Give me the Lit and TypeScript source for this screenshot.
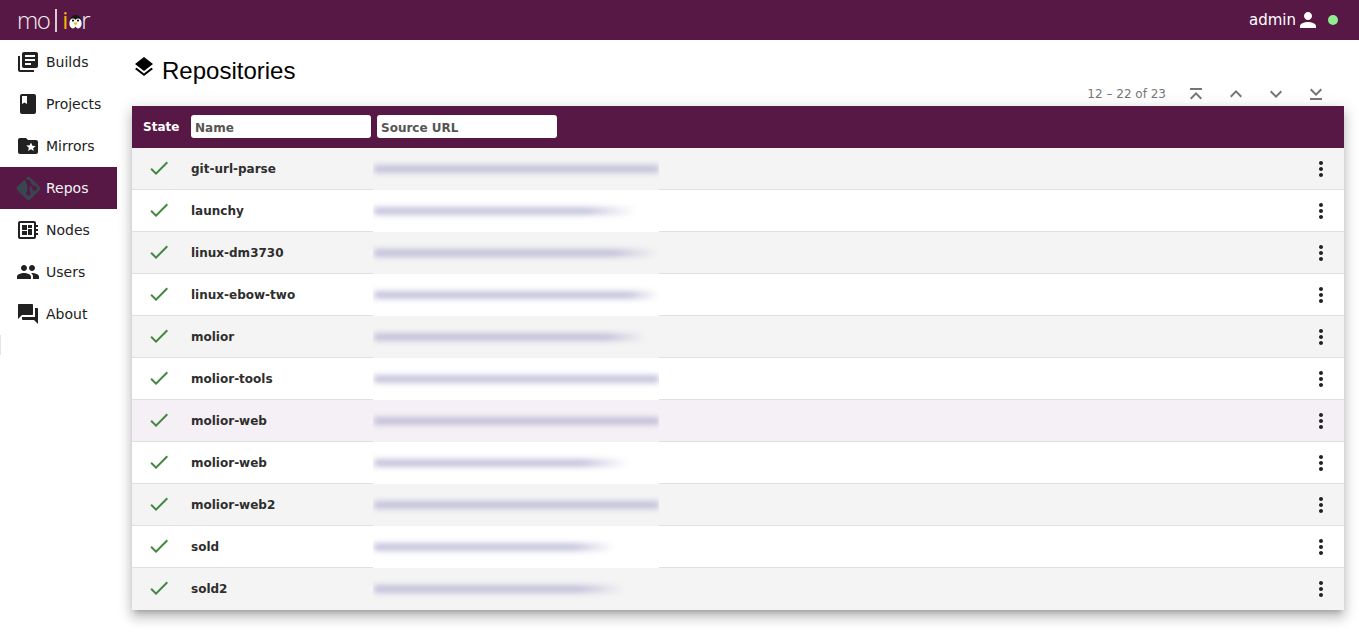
import { LitElement, html, css, svg } from 'lit';
import { customElement } from 'lit/decorators.js';

const icon = (d: string, size = 24) => html`<svg class="icon" width=${size} height=${size} viewBox="0 0 24 24">${svg`<path d=${d}></path>`}</svg>`;

const ICONS = {
  builds: 'M4 6H2v14c0 1.1.9 2 2 2h14v-2H4V6zm16-4H8c-1.1 0-2 .9-2 2v12c0 1.1.9 2 2 2h12c1.1 0 2-.9 2-2V4c0-1.1-.9-2-2-2zm-1 9H9V9h10v2zm-4 4H9v-2h6v2zm4-8H9V5h10v2z',
  projects: 'M18 2H6c-1.1 0-2 .9-2 2v16c0 1.1.9 2 2 2h12c1.1 0 2-.9 2-2V4c0-1.1-.9-2-2-2zM6 4h5v8l-2.5-1.5L6 12V4z',
  mirrors: 'M20 6h-8l-2-2H4c-1.1 0-1.99.9-1.99 2L2 18c0 1.1.9 2 2 2h16c1.1 0 2-.9 2-2V8c0-1.1-.9-2-2-2zm-2.06 11L15 15.28 12.06 17l.78-3.33-2.59-2.24 3.41-.29L15 8.5l1.34 3.14 3.41.29-2.59 2.24.78 3.33z',
  git: 'M2.6,10.59L8.38,4.8L10.07,6.5C9.83,7.35 10.22,8.28 11,8.73V14.27C10.4,14.61 10,15.26 10,16A2,2 0 0,0 12,18A2,2 0 0,0 14,16C14,15.26 13.6,14.61 13,14.27V9.41L15.07,11.5C15,11.65 15,11.82 15,12A2,2 0 0,0 17,14A2,2 0 0,0 19,12A2,2 0 0,0 17,10C16.82,10 16.65,10 16.5,10.07L13.93,7.5C14.19,6.57 13.71,5.55 12.78,5.16C12.35,5 11.9,4.96 11.5,5.07L9.8,3.38L10.59,2.81C11.37,2.03 12.63,2.03 13.41,2.81L21.19,10.59C21.97,11.37 21.97,12.63 21.19,13.41L13.41,21.19C12.63,21.97 11.37,21.97 10.59,21.19L2.81,13.41C2.03,12.63 2.03,11.37 2.81,10.59Z',
  nodes: 'M22 9V7h-2V5c0-1.1-.9-2-2-2H4c-1.1 0-2 .9-2 2v14c0 1.1.9 2 2 2h14c1.1 0 2-.9 2-2v-2h2v-2h-2v-2h2v-2h-2V9h2zm-4 10H4V5h14v14zM6 13h5v4H6zm6-6h4v3h-4zM6 7h5v5H6zm6 4h4v6h-4z',
  users: 'M16 11c1.66 0 2.99-1.34 2.99-3S17.66 5 16 5c-1.66 0-3 1.34-3 3s1.34 3 3 3zm-8 0c1.66 0 2.99-1.34 2.99-3S9.66 5 8 5C6.34 5 5 6.34 5 8s1.34 3 3 3zm0 2c-2.33 0-7 1.17-7 3.5V19h14v-2.5c0-2.33-4.67-3.5-7-3.5zm8 0c-.29 0-.62.02-.97.05 1.16.84 1.97 1.97 1.97 3.45V19h6v-2.5c0-2.33-4.67-3.5-7-3.5z',
  about: 'M21 6h-2v9H6v2c0 .55.45 1 1 1h11l4 4V7c0-.55-.45-1-1-1zm-4 6V3c0-.55-.45-1-1-1H3c-.55 0-1 .45-1 1v14l4-4h10c.55 0 1-.45 1-1z',
  person: 'M12 12c2.21 0 4-1.79 4-4s-1.79-4-4-4-4 1.79-4 4 1.79 4 4 4zm0 2c-2.67 0-8 1.34-8 4v2h16v-2c0-2.66-5.33-4-8-4z',
  layers: 'M11.99 18.54l-7.37-5.73L3 14.07l9 7 9-7-1.63-1.27-7.38 5.74zM12 16l7.36-5.73L21 9l-9-7-9 7 1.63 1.27L12 16z',
  more: 'M12 8c1.1 0 2-.9 2-2s-.9-2-2-2-2 .9-2 2 .9 2 2 2zm0 2c-1.1 0-2 .9-2 2s.9 2 2 2 2-.9 2-2-.9-2-2-2zm0 6c-1.1 0-2 .9-2 2s.9 2 2 2 2-.9 2-2-.9-2-2-2z',
  check: 'M9 16.17L4.83 12l-1.42 1.41L9 19 21 7l-1.41-1.41z',
  first: 'M6 6h12v2H6zM7.41 17.41L12 12.83l4.59 4.58L18 16l-6-6-6 6z',
  up: 'M7.41 15.41L12 10.83l4.59 4.58L18 14l-6-6-6 6z',
  down: 'M7.41 8.59L12 13.17l4.59-4.58L18 10l-6 6-6-6 1.41-1.41z',
  last: 'M6 16h12v2H6zM7.41 6.59L12 11.17l4.59-4.58L18 8l-6 6-6-6z',
};

const NAV = [
  { label: 'Builds', icon: ICONS.builds },
  { label: 'Projects', icon: ICONS.projects },
  { label: 'Mirrors', icon: ICONS.mirrors },
  { label: 'Repos', icon: ICONS.git, active: true },
  { label: 'Nodes', icon: ICONS.nodes },
  { label: 'Users', icon: ICONS.users },
  { label: 'About', icon: ICONS.about },
];

// url = width of the blurred-out source url, fade = how soft its end is
const REPOS = [
  { name: 'git-url-parse', url: 320, fade: 0 },
  { name: 'launchy', url: 262, fade: 50 },
  { name: 'linux-dm3730', url: 284, fade: 45 },
  { name: 'linux-ebow-two', url: 286, fade: 30 },
  { name: 'molior', url: 272, fade: 40 },
  { name: 'molior-tools', url: 320, fade: 0 },
  { name: 'molior-web', url: 320, fade: 0, hover: true },
  { name: 'molior-web', url: 254, fade: 45 },
  { name: 'molior-web2', url: 320, fade: 0 },
  { name: 'sold', url: 240, fade: 40 },
  { name: 'sold2', url: 250, fade: 45 },
];

@customElement('app-root')
export class AppRoot extends LitElement {
  static styles = css`
    :host {
      display: block;
      font-family: "DejaVu Sans", sans-serif;
      color: #212121;
    }

    .topbar {
      display: flex;
      align-items: center;
      height: 40px;
      padding: 0 21px 0 18px;
      background-color: #581845;
      color: #fff;
    }

    .logo {
      display: flex;
      align-items: center;
      flex: 1;
      font-family: "Open Sans", sans-serif;
      font-size: 24px;
      line-height: 40px;
      color: #f4eef2;
    }

    .logo .mo {
      margin-left: -1px;
      font-weight: 300;
      letter-spacing: -1.5px;
    }

    .logo .bar {
      width: 2px;
      height: 23px;
      margin: 1px 5px 0 6px;
      background-color: #d9ccd5;
    }

    .logo .i { color: #f5b400; }
    .logo svg { margin: 3px -1px 0 1px; }
    .logo .r { font-weight: 300; }

    .user {
      display: flex;
      align-items: center;
      font-size: 15px;
    }

    .user .icon { fill: #fff; }

    .dot {
      width: 10px;
      height: 10px;
      margin-left: 8px;
      border-radius: 50%;
      background-color: #90ee90;
    }

    .layout {
      display: flex;
      align-items: flex-start;
    }

    .sidebar {
      flex: none;
      width: 117px;
      padding-top: 1px;
    }

    .nav-item {
      display: flex;
      align-items: center;
      gap: 6px;
      height: 42px;
      padding-left: 16px;
      font-size: 14px;
    }

    .nav-item .icon { fill: #212121; }

    .nav-item.active {
      background-color: #581845;
      color: #f5f5f5;
    }

    .nav-item.active .icon {
      margin: 0 -2.5px;
      fill: #37474f;
    }

    .sidebar-mark {
      width: 1px;
      height: 20px;
      background-color: #e4e4e4;
    }

    .content {
      flex: 1;
      min-width: 0;
      padding: 0 15px 23px;
    }

    .title {
      display: flex;
      align-items: center;
      gap: 6px;
      height: 33px;
      padding-top: 14px;
      font-family: "Liberation Sans", sans-serif;
      font-size: 24px;
      color: #000;
    }

    .title .icon {
      margin-top: -7px;
      fill: #000;
    }

    .pager {
      display: flex;
      justify-content: flex-end;
      align-items: center;
      gap: 16px;
      height: 24px;
      margin-top: -14px;
      padding-top: 9px;
      padding-right: 16px;
      font-size: 12px;
      color: #757575;
    }

    .pager .range { margin-right: 2px; }
    .pager .icon { fill: #757575; }

    .table {
      background-color: #fff;
      box-shadow: 0 5px 5px -3px rgba(0, 0, 0, .2), 0 8px 10px 1px rgba(0, 0, 0, .14), 0 3px 14px 2px rgba(0, 0, 0, .12);
    }

    .head {
      display: flex;
      align-items: center;
      height: 42px;
      background-color: #581845;
      color: #fff;
      font-size: 12px;
      font-weight: 700;
    }

    .head .state {
      width: 59px;
      padding-left: 11px;
      box-sizing: border-box;
    }

    .head input {
      width: 180px;
      height: 23px;
      margin: 0 6px 1px 0;
      padding: 2px 4px 0;
      box-sizing: border-box;
      border: none;
      outline: none;
      border-radius: 3px;
      background-color: #fff;
      font: 700 12px "DejaVu Sans", sans-serif;
    }

    .head input::placeholder {
      color: #555;
      opacity: 1;
    }

    .row {
      display: flex;
      align-items: center;
      height: 42px;
      background-color: #fff;
      box-shadow: inset 0 -1px #e0e0e0;
      font-size: 12px;
      font-weight: 700;
    }

    .row:nth-child(odd) { background-color: #f4f4f4; }
    .row.hover { background-color: #f5f0f5; }
    .row:last-child { box-shadow: none; }

    .row .state {
      display: flex;
      width: 59px;
      margin-bottom: 2px;
      padding-left: 15px;
      box-sizing: border-box;
    }

    .row .state .icon { fill: #43883e; }

    .row .name {
      width: 182px;
      color: #2e2e2e;
    }

    .url {
      display: flex;
      align-items: center;
      width: 286px;
      height: 42px;
      overflow: hidden;
      background-color: inherit;
    }

    .smear {
      height: 6px;
      margin-left: 1px;
      filter: blur(3px);
    }

    .more {
      display: flex;
      margin-left: auto;
      margin-right: 11px;
    }

    .more .icon { fill: #212121; }
  `;

  render() {
    return html`
      <div class="topbar">
        <div class="logo">
          <span class="mo">mo</span><span class="bar"></span><span class="i">i</span>
          <svg width="13" height="14" viewBox="0 0 13 14">
            <ellipse cx="6.5" cy="6.5" rx="6" ry="6.5" fill="#161616"></ellipse>
            <ellipse cx="3.9" cy="8.4" rx="3.5" ry="5" fill="#fff"></ellipse>
            <ellipse cx="9.1" cy="8.4" rx="3.5" ry="5" fill="#fff"></ellipse>
            <circle cx="4" cy="5.6" r="1.1" fill="#161616"></circle>
            <circle cx="9" cy="5.6" r="1.1" fill="#161616"></circle>
            <path d="M4.4 7.4h4.2L6.5 10.4z" fill="#f5b400"></path>
          </svg>
          <span class="r">r</span>
        </div>
        <div class="user">admin${icon(ICONS.person)}<span class="dot"></span></div>
      </div>
      <div class="layout">
        <nav class="sidebar">
          ${NAV.map(item => html`
            <div class="nav-item ${item.active ? 'active' : ''}">${icon(item.icon, item.active ? 29 : 24)}<span>${item.label}</span></div>
          `)}
          <div class="sidebar-mark"></div>
        </nav>
        <main class="content">
          <div class="title">${icon(ICONS.layers)}<span>Repositories</span></div>
          <div class="pager">
            <span class="range">12 – 22 of 23</span>
            ${icon(ICONS.first)}${icon(ICONS.up)}${icon(ICONS.down)}${icon(ICONS.last)}
          </div>
          <div class="table">
            <div class="head">
              <div class="state">State</div>
              <input placeholder="Name" />
              <input placeholder="Source URL" />
            </div>
            <div class="rows">
              ${REPOS.map(repo => html`
                <div class="row ${repo.hover ? 'hover' : ''}">
                  <div class="state">${icon(ICONS.check)}</div>
                  <div class="name">${repo.name}</div>
                  <div class="url">
                    <div class="smear" style="width:${repo.url}px;background:linear-gradient(to right, #b4b2d2 calc(100% - ${repo.fade}px), transparent)"></div>
                  </div>
                  <div class="more">${icon(ICONS.more)}</div>
                </div>
              `)}
            </div>
          </div>
        </main>
      </div>
    `;
  }
}
